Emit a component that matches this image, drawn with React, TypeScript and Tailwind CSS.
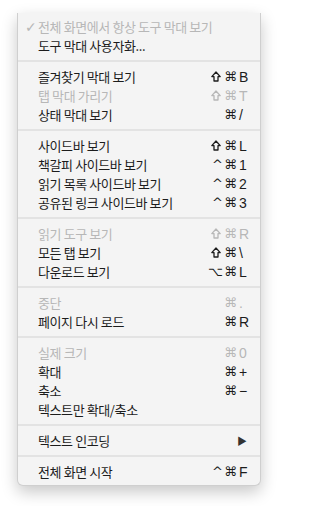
type Item =
  | { kind: "sep" }
  | {
      kind: "item";
      label: string;
      mods?: string;
      keyChar?: string;
      disabled?: boolean;
      checked?: boolean;
      submenu?: boolean;
    };

const items: Item[] = [
  { kind: "item", label: "전체 화면에서 항상 도구 막대 보기", disabled: true, checked: true },
  { kind: "item", label: "도구 막대 사용자화..." },
  { kind: "sep" },
  { kind: "item", label: "즐겨찾기 막대 보기", mods: "⇧⌘", keyChar: "B" },
  { kind: "item", label: "탭 막대 가리기", mods: "⇧⌘", keyChar: "T", disabled: true },
  { kind: "item", label: "상태 막대 보기", mods: "⌘", keyChar: "/" },
  { kind: "sep" },
  { kind: "item", label: "사이드바 보기", mods: "⇧⌘", keyChar: "L" },
  { kind: "item", label: "책갈피 사이드바 보기", mods: "^⌘", keyChar: "1" },
  { kind: "item", label: "읽기 목록 사이드바 보기", mods: "^⌘", keyChar: "2" },
  { kind: "item", label: "공유된 링크 사이드바 보기", mods: "^⌘", keyChar: "3" },
  { kind: "sep" },
  { kind: "item", label: "읽기 도구 보기", mods: "⇧⌘", keyChar: "R", disabled: true },
  { kind: "item", label: "모든 탭 보기", mods: "⇧⌘", keyChar: "\\" },
  { kind: "item", label: "다운로드 보기", mods: "⌥⌘", keyChar: "L" },
  { kind: "sep" },
  { kind: "item", label: "중단", mods: "⌘", keyChar: ".", disabled: true },
  { kind: "item", label: "페이지 다시 로드", mods: "⌘", keyChar: "R" },
  { kind: "sep" },
  { kind: "item", label: "실제 크기", mods: "⌘", keyChar: "0", disabled: true },
  { kind: "item", label: "확대", mods: "⌘", keyChar: "+" },
  { kind: "item", label: "축소", mods: "⌘", keyChar: "−" },
  { kind: "item", label: "텍스트만 확대/축소" },
  { kind: "sep" },
  { kind: "item", label: "텍스트 인코딩", submenu: true },
  { kind: "sep" },
  { kind: "item", label: "전체 화면 시작", mods: "^⌘", keyChar: "F" },
];

// outline shift arrow, drawn because the font's ⇧ is too small
function ShiftIcon() {
  return (
    <svg width="10" height="11" viewBox="0 0 10 11" className="mr-[3px]">
      <path
        d="M5 1 L9.2 5.6 H7 V10 H3 V5.6 H0.8 Z"
        fill="none"
        stroke="currentColor"
        strokeWidth="1.3"
        strokeLinejoin="round"
      />
    </svg>
  );
}

function Mods({ mods }: { mods: string }) {
  return (
    <span className="flex items-center font-['DejaVu_Sans',sans-serif] text-[13px]">
      {mods.split("").map((m, i) =>
        m === "⇧" ? (
          <ShiftIcon key={i} />
        ) : (
          <span key={i} className="mr-[1px]">
            {m}
          </span>
        )
      )}
    </span>
  );
}

export default function App() {
  return (
    <div className="h-[506px] w-[278px] bg-white pl-[17px] pt-[13px]">
      <div className="w-[244px] rounded-b-[6px] border border-t-0 border-[#cfcfcf] bg-[#f4f4f4] pb-[4px] pt-[4px] shadow-[0_6px_16px_rgba(0,0,0,0.22)] font-['Noto_Sans_CJK_KR',sans-serif] text-[13px] leading-none text-[#1c1c1c]">
        {items.map((item, i) => {
          if (item.kind === "sep") {
            return (
              <div key={i} className="flex h-[12px] items-center">
                <div className="h-[2px] w-full bg-[#e3e3e3]" />
              </div>
            );
          }
          const color = item.disabled ? "text-[#b7b7b7]" : "text-[#1c1c1c]";
          return (
            <div key={i} className={`flex h-[19px] items-center pr-[12px] ${color}`}>
              <span className="w-[20px] pl-[7px] font-['DejaVu_Sans',sans-serif] text-[14px] font-bold">
                {item.checked ? "✓" : ""}
              </span>
              <span className="flex-1 tracking-[-0.4px]">{item.label}</span>
              {item.keyChar && item.mods && (
                <span className="flex items-center font-['Liberation_Sans','DejaVu_Sans',sans-serif] text-[14px]">
                  <Mods mods={item.mods} />
                  <span className="w-[10px] pl-[1px] text-left">{item.keyChar}</span>
                </span>
              )}
              {item.submenu && <span className="pr-[1px] text-[10px] text-[#333]">▶</span>}
            </div>
          );
        })}
      </div>
    </div>
  );
}
